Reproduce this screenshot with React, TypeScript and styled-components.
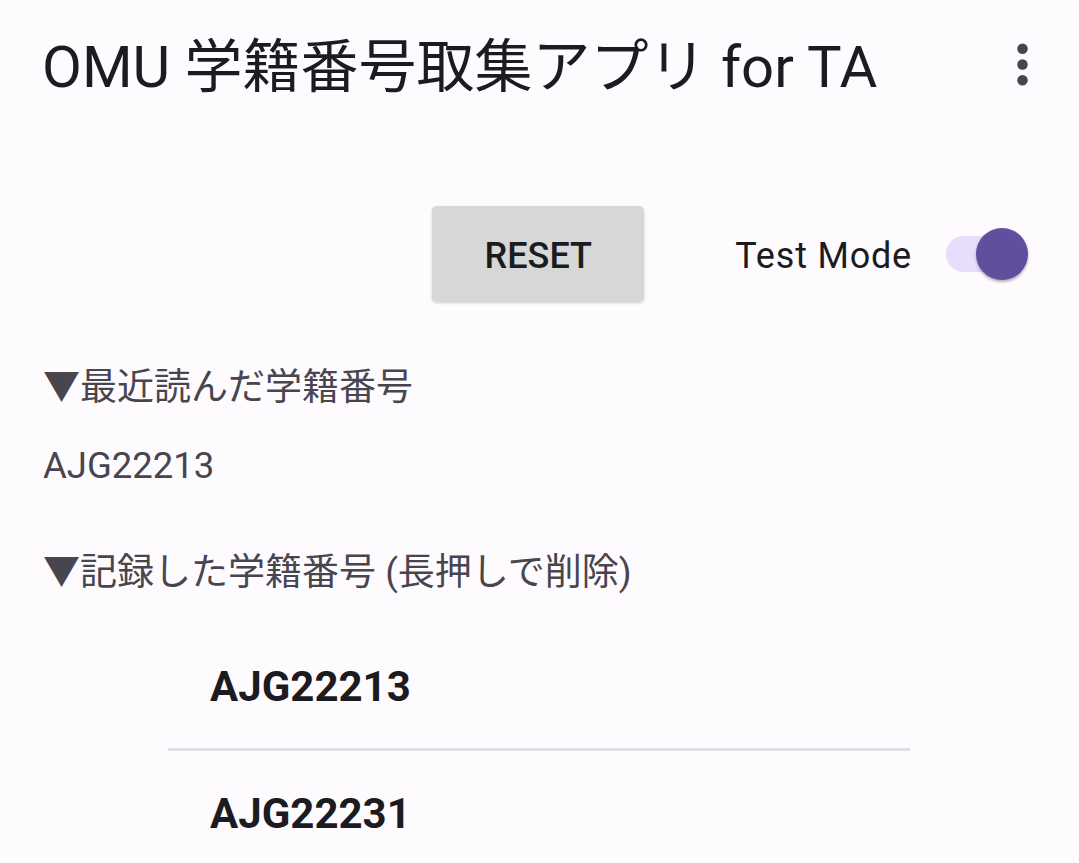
import React from 'react';
import styled, { createGlobalStyle } from 'styled-components';

const GlobalStyle = createGlobalStyle`
  html, body {
    margin: 0;
    padding: 0;
    background: #fdfbfe;
  }
  body {
    font-family: Roboto, 'Noto Sans CJK JP', sans-serif;
    color: #1c1b1f;
  }
`;

const recentId = 'AJG22213';
const savedIds = ['AJG22213', 'AJG22231'];

const MoreIcon: React.FC = () => (
  <svg width="63" height="63" viewBox="0 0 24 24" fill="#49454f">
    <circle cx="12" cy="6" r="2" />
    <circle cx="12" cy="12" r="2" />
    <circle cx="12" cy="18" r="2" />
  </svg>
);

export default function App() {
  return (
    <Page>
      <GlobalStyle />
      <TopBar>
        <Title>OMU 学籍番号取集アプリ for TA</Title>
        <MenuButton>
          <MoreIcon />
        </MenuButton>
      </TopBar>

      <Controls>
        <ResetButton>RESET</ResetButton>
        <SwitchLabel>Test Mode</SwitchLabel>
        <Switch>
          <Track />
          <Thumb />
        </Switch>
      </Controls>

      <Content>
        <SectionHeader>▼最近読んだ学籍番号</SectionHeader>
        <RecentValue>{recentId}</RecentValue>
        <SectionHeader>▼記録した学籍番号 (長押しで削除)</SectionHeader>
      </Content>

      <List>
        {savedIds.map((id, i) => (
          <ListItem key={id} divider={i < savedIds.length - 1}>
            {id}
          </ListItem>
        ))}
      </List>
    </Page>
  );
}

const Page = styled.div`
  width: 1079px;
  height: 863px;
  overflow: hidden;
  background: #fdfbfe;
`;

const TopBar = styled.div`
  height: 136px;
  display: flex;
  align-items: center;
  justify-content: space-between;
  padding: 0 25px 0 42px;
  box-sizing: border-box;
`;

const Title = styled.h1`
  margin: 0;
  font-size: 58px;
  font-weight: 400;
  line-height: 1.2;
  color: #1c1b1f;
  white-space: nowrap;
`;

const MenuButton = styled.div`
  display: flex;
  margin-bottom: 8px;
`;

const Controls = styled.div`
  display: flex;
  align-items: center;
  justify-content: flex-end;
  padding: 70px 51px 0 0;
  height: 96px;
`;

const ResetButton = styled.button`
  width: 212px;
  height: 96px;
  border: none;
  border-radius: 5px;
  background: #d6d8d7;
  box-shadow: 0 1px 3px rgba(0, 0, 0, 0.18);
  font-family: Roboto, sans-serif;
  font-size: 36px;
  font-weight: 500;
  color: #1c1b1f;
  margin-right: 91px;
  padding: 3px 0 0;
`;

const SwitchLabel = styled.span`
  font-size: 36px;
  color: #1c1b1f;
  margin: 3px 34px 0 0;
  letter-spacing: 0.8px;
`;

const Switch = styled.div`
  position: relative;
  width: 82px;
  height: 52px;
  display: flex;
  align-items: center;
`;

const Track = styled.div`
  width: 72px;
  height: 36px;
  border-radius: 18px;
  background: #e8defb;
`;

const Thumb = styled.div`
  position: absolute;
  right: 0;
  top: 0;
  width: 52px;
  height: 52px;
  border-radius: 50%;
  background: #604f9d;
  box-shadow: 0 2px 3px rgba(0, 0, 0, 0.3);
`;

const Content = styled.div`
  padding: 61px 0 0 43px;
`;

const SectionHeader = styled.div`
  font-size: 37px;
  line-height: 50px;
  color: #49454f;
  white-space: nowrap;
`;

const RecentValue = styled.div`
  font-size: 36.5px;
  line-height: 50px;
  color: #49454f;
  margin: 28px 0 57px;
`;

const List = styled.div`
  margin: 26px 0 0 168px;
  width: 742px;
`;

const ListItem = styled.div<{ divider: boolean }>`
  height: 124px;
  display: flex;
  align-items: center;
  padding: 0 0 0 42px;
  font-size: 42px;
  font-weight: 700;
  color: #1c1b1f;
  border-bottom: ${({ divider }) => (divider ? '3px solid #e0dfe3' : 'none')};
`;
